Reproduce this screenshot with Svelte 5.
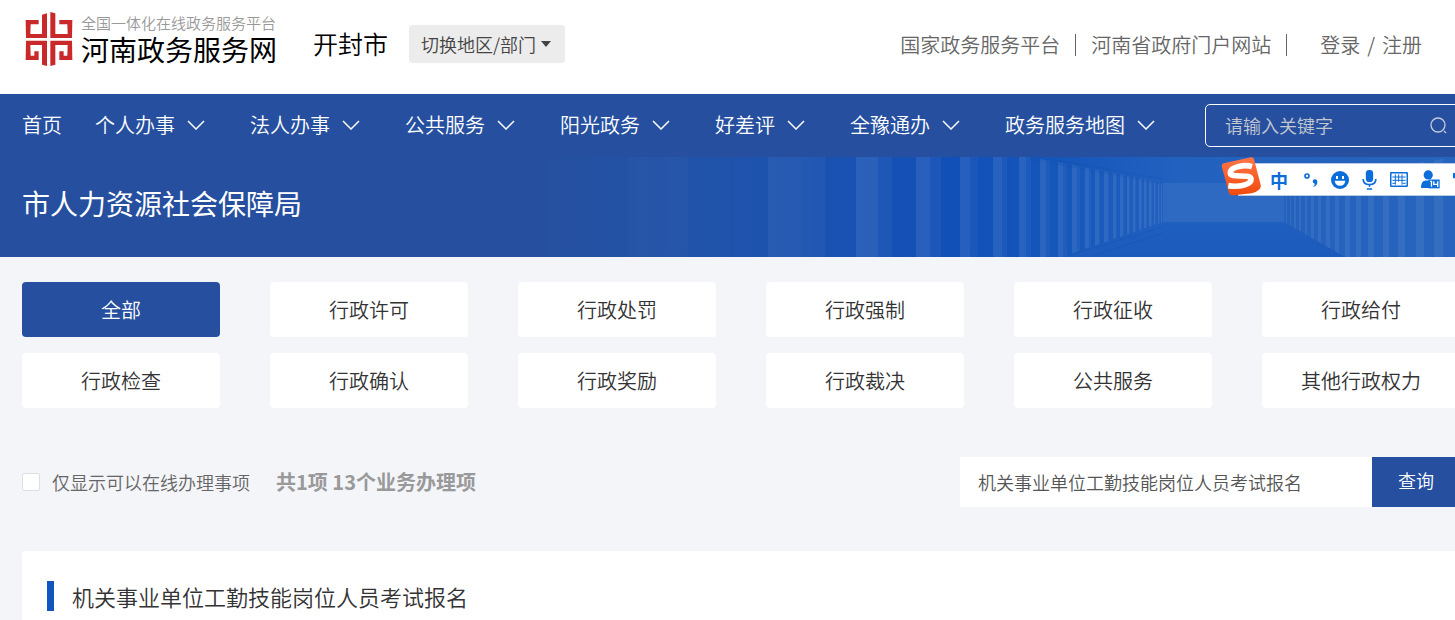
<script>
let navItems = ['个人办事', '法人办事', '公共服务', '阳光政务', '好差评', '全豫通办', '政务服务地图'];
let types = [
     '全部', '行政许可', '行政处罚', '行政强制', '行政征收', '行政给付',
     '行政检查', '行政确认', '行政奖励', '行政裁决', '公共服务', '其他行政权力'
];

let active = $state('全部');
let onlineOnly = $state(false);
let siteWord = $state('');
let itemWord = $state('机关事业单位工勤技能岗位人员考试报名');

// banner pillars: x, lit width, shaded width
let leftPillars = [
     [88, 60, 0], [228, 34, 23], [316, 22, 14], [376, 14, 11], [420, 10, 8],
     [453, 9, 5], [479, 7, 5], [500, 6, 4], [518, 5, 4], [532, 5, 3],
     [545, 4, 2], [555, 4, 1], [564, 4, 1], [573, 3, 1], [580, 3, 1],
     [587, 2, 1], [593, 2, 1], [599, 2, 1], [604, 2, 1], [609, 2, 1],
     [614, 1, 1], [618, 1, 1], [621, 1, 0]
];
let rightPillars = [
     [746, 1], [750, 1], [754, 2], [759, 2], [765, 2], [771, 3], [778, 3],
     [786, 4], [795, 4], [805, 5], [816, 5], [828, 6], [843, 6], [858, 7],
     [876, 8], [894, 9]
];
</script>

<div class="page">
     <header>
          <div class="container top">
               <a href="#home" class="logo">
                    <svg viewBox="0 0 144 162" width="48" height="54" aria-hidden="true">
                         <g fill="#c9292b">
                              <path d="M2 24H41V37H17L16 66H51V8L66 4V78H3Z" />
                              <path d="M142 24H103V37H127L128 66H91V4L76 0V78H141Z" />
                              <path d="M3 86H66V162L51 158V99H16L17 131H28V118H41V144H2Z" />
                              <path d="M141 86H76V162L91 158V99H128L127 131H116V118H103V144H142Z" />
                         </g>
                    </svg>
                    <span class="names">
                         <span class="slogan">全国一体化在线政务服务平台</span>
                         <span class="site">河南政务服务网</span>
                    </span>
               </a>
               <span class="city">开封市</span>
               <button type="button" class="switch">切换地区/部门 <i class="caret"></i></button>
               <div class="links">
                    <a href="#nation">国家政务服务平台</a>
                    <i class="line"></i>
                    <a href="#province">河南省政府门户网站</a>
                    <i class="line"></i>
                    <span class="account"><a href="#login">登录</a><span>/</span><a href="#register">注册</a></span>
               </div>
          </div>
     </header>

     <nav>
          <div class="container menu">
               <a href="#home" class="first">首页</a>
               {#each navItems as item}
                    <a href="#{item}">
                         {item}
                         <svg viewBox="0 0 18 10" width="18" height="10" aria-hidden="true"><path d="M1 1L9 9L17 1" fill="none" stroke="#fff" stroke-width="1.5" /></svg>
                    </a>
               {/each}
               <form class="site-search" onsubmit={(e) => e.preventDefault()}>
                    <input type="text" placeholder="请输入关键字" aria-label="请输入关键字" bind:value={siteWord}>
                    <button type="submit" aria-label="搜索">
                         <svg viewBox="0 0 18 18" width="18" height="18"><path d="M14 14L16 16M8 1A7 7 0 1 1 8 15A7 7 0 1 1 8 1" fill="none" stroke="#c3cbdc" stroke-width="1.3" /></svg>
                    </button>
               </form>
          </div>
     </nav>

     <section class="banner">
          <svg class="hall" viewBox="0 0 915 100" aria-hidden="true">
               <defs>
                    <linearGradient id="sky">
                         <stop offset="0" stop-color="#26509f" />
                         <stop offset=".2" stop-color="#2053ab" />
                         <stop offset=".46" stop-color="#1150b8" />
                         <stop offset=".56" stop-color="#1556ba" />
                         <stop offset=".7" stop-color="#2361bf" />
                         <stop offset="1" stop-color="#2664bd" />
                    </linearGradient>
                    <linearGradient id="floor" x2="0" y2="1">
                         <stop offset="0" stop-color="#1f5fbf" />
                         <stop offset="1" stop-color="#1c5abc" />
                    </linearGradient>
                    <clipPath id="left"><path d="M0 0H490L623 26V65L522 100H0Z" /></clipPath>
                    <clipPath id="right"><path d="M744 26L915 0V100H805L744 65Z" /></clipPath>
               </defs>
               <rect width="915" height="100" fill="url(#sky)" />
               <path d="M623 65H744L805 100H522Z" fill="url(#floor)" />
               <rect x="623" y="26" width="121" height="39" fill="#2e69c2" />
               <g clip-path="url(#left)">
                    {#each leftPillars as [x, lit, shade], i}
                         <rect {x} y="0" width={lit} height="100" fill="#fff" opacity={i == 0 ? 0.02 : i == 1 ? 0.05 : 0.09} />
                         <rect x={x + lit} y="0" width={shade} height="100" fill="#fff" opacity=".04" />
                    {/each}
               </g>
               <g clip-path="url(#right)">
                    {#each rightPillars as [x, width]}
                         <rect {x} y="0" {width} height="100" fill="#fff" opacity=".07" />
                    {/each}
               </g>
               <path d="M490 2L623 27M510 2L623 22M530 98L623 70M555 98L623 76" stroke="#0d49a8" stroke-opacity=".25" fill="none" />
          </svg>
          <h1 class="container">市人力资源社会保障局</h1>

          <div class="ime">
               <svg viewBox="0 0 120 117" width="40" height="39" class="badge" aria-hidden="true">
                    <defs><linearGradient id="orange" x2="0" y2="1"><stop offset="0" stop-color="#ff7547" /><stop offset="1" stop-color="#f04a0c" /></linearGradient></defs>
                    <path d="M8 19L90 1Q97 0 99 7L119 83Q121 92 114 98Q105 106 92 109L38 115Q27 117 24 108L2 28Q1 21 8 19Z" fill="url(#orange)" />
                    <path d="M93 29C72 22 29 28 28 47C27 66 88 48 90 66C92 84 51 91 22 86" fill="none" stroke="#fff" stroke-width="17" />
               </svg>
               <span class="lang">中</span>
               <svg viewBox="0 0 42 42" width="14" height="14" aria-hidden="true"><circle cx="9" cy="9" r="6" fill="none" stroke="#0b6edb" stroke-width="5" /><path d="M26 25A7 7 0 1 1 40 26Q41 37 27 42Q34 35 32 32Q26 31 26 25Z" fill="#0b6edb" /></svg>
               <svg viewBox="0 0 54 54" width="18" height="18" aria-hidden="true"><circle cx="27" cy="27" r="27" fill="#0b6edb" /><path d="M15 15H21V24H15ZM33 15H39V24H33ZM11 29H43Q41 44 27 44Q13 44 11 29Z" fill="#fff" /></svg>
               <svg viewBox="0 0 44 60" width="15" height="20" aria-hidden="true"><rect x="11" y="0" width="22" height="36" rx="10" fill="#0b6edb" /><path d="M3 27Q3 44 22 44Q41 44 41 27M22 44V50M14 57H30" fill="none" stroke="#0b6edb" stroke-width="5" /></svg>
               <svg viewBox="0 0 54 45" width="18" height="15" aria-hidden="true"><rect x="2" y="2" width="50" height="41" rx="4" fill="none" stroke="#0b6edb" stroke-width="5" /><path d="M7 15H47M7 25H47M7 34H16M38 34H47M16 7V38M26 7V29M36 7V38" stroke="#0b6edb" stroke-width="3" /></svg>
               <svg viewBox="0 0 58 56" width="19" height="19" aria-hidden="true"><circle cx="22" cy="14" r="14" fill="#0b6edb" /><path d="M0 54Q0 32 14 31H30V54Z" fill="#0b6edb" /><rect x="23" y="28" width="34" height="27" fill="#0b6edb" /><path d="M28 34H32V50M39 33V43H52M51 33V51" fill="none" stroke="#fff" stroke-width="4" /></svg>
               <svg viewBox="0 0 54 54" width="18" height="18" aria-hidden="true"><path d="M0 6H14L20 10H34L40 6H54V22H44V50H10V22H0Z" fill="#0b6edb" /></svg>
          </div>
     </section>

     <main class="container">
          <div class="types">
               {#each types as type}
                    <button type="button" class:active={active == type} onclick={() => active = type}>{type}</button>
               {/each}
          </div>

          <div class="filter">
               <label class="online"><input type="checkbox" bind:checked={onlineOnly}>仅显示可以在线办理事项</label>
               <strong>共1项 13个业务办理项</strong>
               <form class="query" onsubmit={(e) => e.preventDefault()}>
                    <input type="text" aria-label="事项名称" bind:value={itemWord}>
                    <button type="submit">查询</button>
               </form>
          </div>

          <section class="result">
               <h2>机关事业单位工勤技能岗位人员考试报名</h2>
          </section>
     </main>
</div>

<style>
     :global(body) {
          background: #f3f5f9;
     }
     .page {
          overflow: hidden;
          font-family: "Noto Sans CJK SC", sans-serif;
          font-weight: 350;
          font-size: 20px;
          line-height: 30px;
          color: #333;
     }
     .container {
          margin: 0 -5px 0 22px;
     }
     a {
          color: inherit;
          text-decoration: none;
          white-space: nowrap;
     }
     button, input {
          font: inherit;
          color: inherit;
          border: 0;
          padding: 0;
          margin: 0;
          box-sizing: border-box;
     }
     button {
          cursor: pointer;
     }
     header {
          background: #fff;
     }
     .top {
          display: flex;
          align-items: center;
          height: 88px;
          padding-bottom: 6px;
     }
     .logo {
          display: flex;
          align-items: center;
          gap: 8px;
          margin: 0 36px 10px 3px;
     }
     .names {
          display: flex;
          flex-direction: column;
     }
     .slogan {
          font-size: 15px;
          line-height: 20px;
          color: #999;
     }
     .site {
          font-size: 28px;
          line-height: 32px;
          font-weight: 400;
          color: #000;
     }
     .city {
          margin: 0 21px 2px 0;
          font-size: 25px;
          color: #000;
     }
     .switch {
          display: flex;
          align-items: center;
          gap: 5px;
          height: 38px;
          padding: 0 14px 0 12px;
          font-size: 18px;
          color: #444;
          background: #ececec;
          border-radius: 3px;
          white-space: nowrap;
     }
     .caret {
          border: 5px solid transparent;
          border-top: 6px solid #444;
          border-bottom: 0;
     }
     .links {
          display: flex;
          align-items: center;
          margin: 0 38px 0 auto;
          padding-top: 2px;
          color: #666;
     }
     .line {
          width: 1px;
          height: 22px;
          margin: 0 15px;
          background: #666;
     }
     .account {
          display: flex;
          gap: 7px;
          margin-left: 18px;
     }
     nav {
          background: #26509f;
          color: #fff;
     }
     .menu {
          display: flex;
          align-items: center;
          height: 63px;
     }
     .menu > a {
          display: flex;
          align-items: center;
          gap: 12px;
          margin-right: 45px;
          padding-bottom: 2px;
     }
     .menu > .first {
          margin-right: 33px;
     }
     .site-search {
          display: flex;
          align-items: center;
          flex: 1;
          min-width: 0;
          height: 43px;
          margin-left: 5px;
          padding: 0 11px 0 19px;
          box-sizing: border-box;
          border: 1px solid #fff;
          border-radius: 5px;
     }
     .site-search input {
          flex: 1;
          min-width: 0;
          padding-bottom: 2px;
          font-size: 18px;
          background: none;
          outline: none;
     }
     .site-search input::placeholder {
          color: #c3c7d0;
          opacity: 1;
     }
     .site-search button {
          display: flex;
          background: none;
     }
     .banner {
          position: relative;
          height: 100px;
          background: #26509f;
     }
     .hall {
          position: absolute;
          top: 0;
          right: 0;
          height: 100%;
     }
     h1 {
          position: relative;
          padding-top: 26px;
          font-size: 28px;
          line-height: 40px;
          font-weight: 400;
          color: #fff;
     }
     .ime {
          position: absolute;
          top: 6px;
          right: -16px;
          display: flex;
          align-items: center;
          gap: 13px;
          height: 31px;
          padding-left: 32px;
          background: #fff;
          border-block: 1px solid #b4cbea;
     }
     .badge {
          position: absolute;
          top: -7px;
          left: -17px;
     }
     .lang {
          margin-right: 3px;
          font-size: 18px;
          line-height: 20px;
          font-weight: 700;
          color: #0b6edb;
     }
     .types {
          display: grid;
          grid-template-columns: repeat(6, 1fr);
          gap: 16px 50px;
          padding-top: 25px;
     }
     .types button {
          height: 55px;
          background: #fff;
          border-radius: 4px;
     }
     .types .active {
          background: #26509f;
          color: #fff;
     }
     .filter {
          display: flex;
          align-items: center;
          margin: 49px 0 44px;
     }
     .online {
          display: flex;
          align-items: center;
          gap: 12px;
          font-size: 18px;
          color: #666;
          white-space: nowrap;
     }
     .online input {
          appearance: none;
          width: 18px;
          height: 18px;
          background: #fff;
          border: 1px solid #dcdfe6;
          border-radius: 2px;
     }
     .online input:checked {
          background: #26509f;
     }
     strong {
          margin-left: 26px;
          color: #999;
          font-weight: 700;
     }
     .query {
          display: flex;
          width: 500px;
          margin-left: auto;
          font-size: 18px;
     }
     .query input {
          flex: 1;
          min-width: 0;
          height: 50px;
          padding: 0 18px;
          background: #fff;
          color: #555;
          outline: none;
     }
     .query button {
          padding: 0 26px 4px;
          background: #26509f;
          color: #fff;
     }
     .result {
          padding: 30px 25px;
          background: #fff;
          border-radius: 3px;
     }
     h2 {
          margin: 0;
          padding-left: 18px;
          border-left: 7px solid #0f55bd;
          font-size: 22px;
          line-height: 30px;
          font-weight: 350;
     }
</style>
